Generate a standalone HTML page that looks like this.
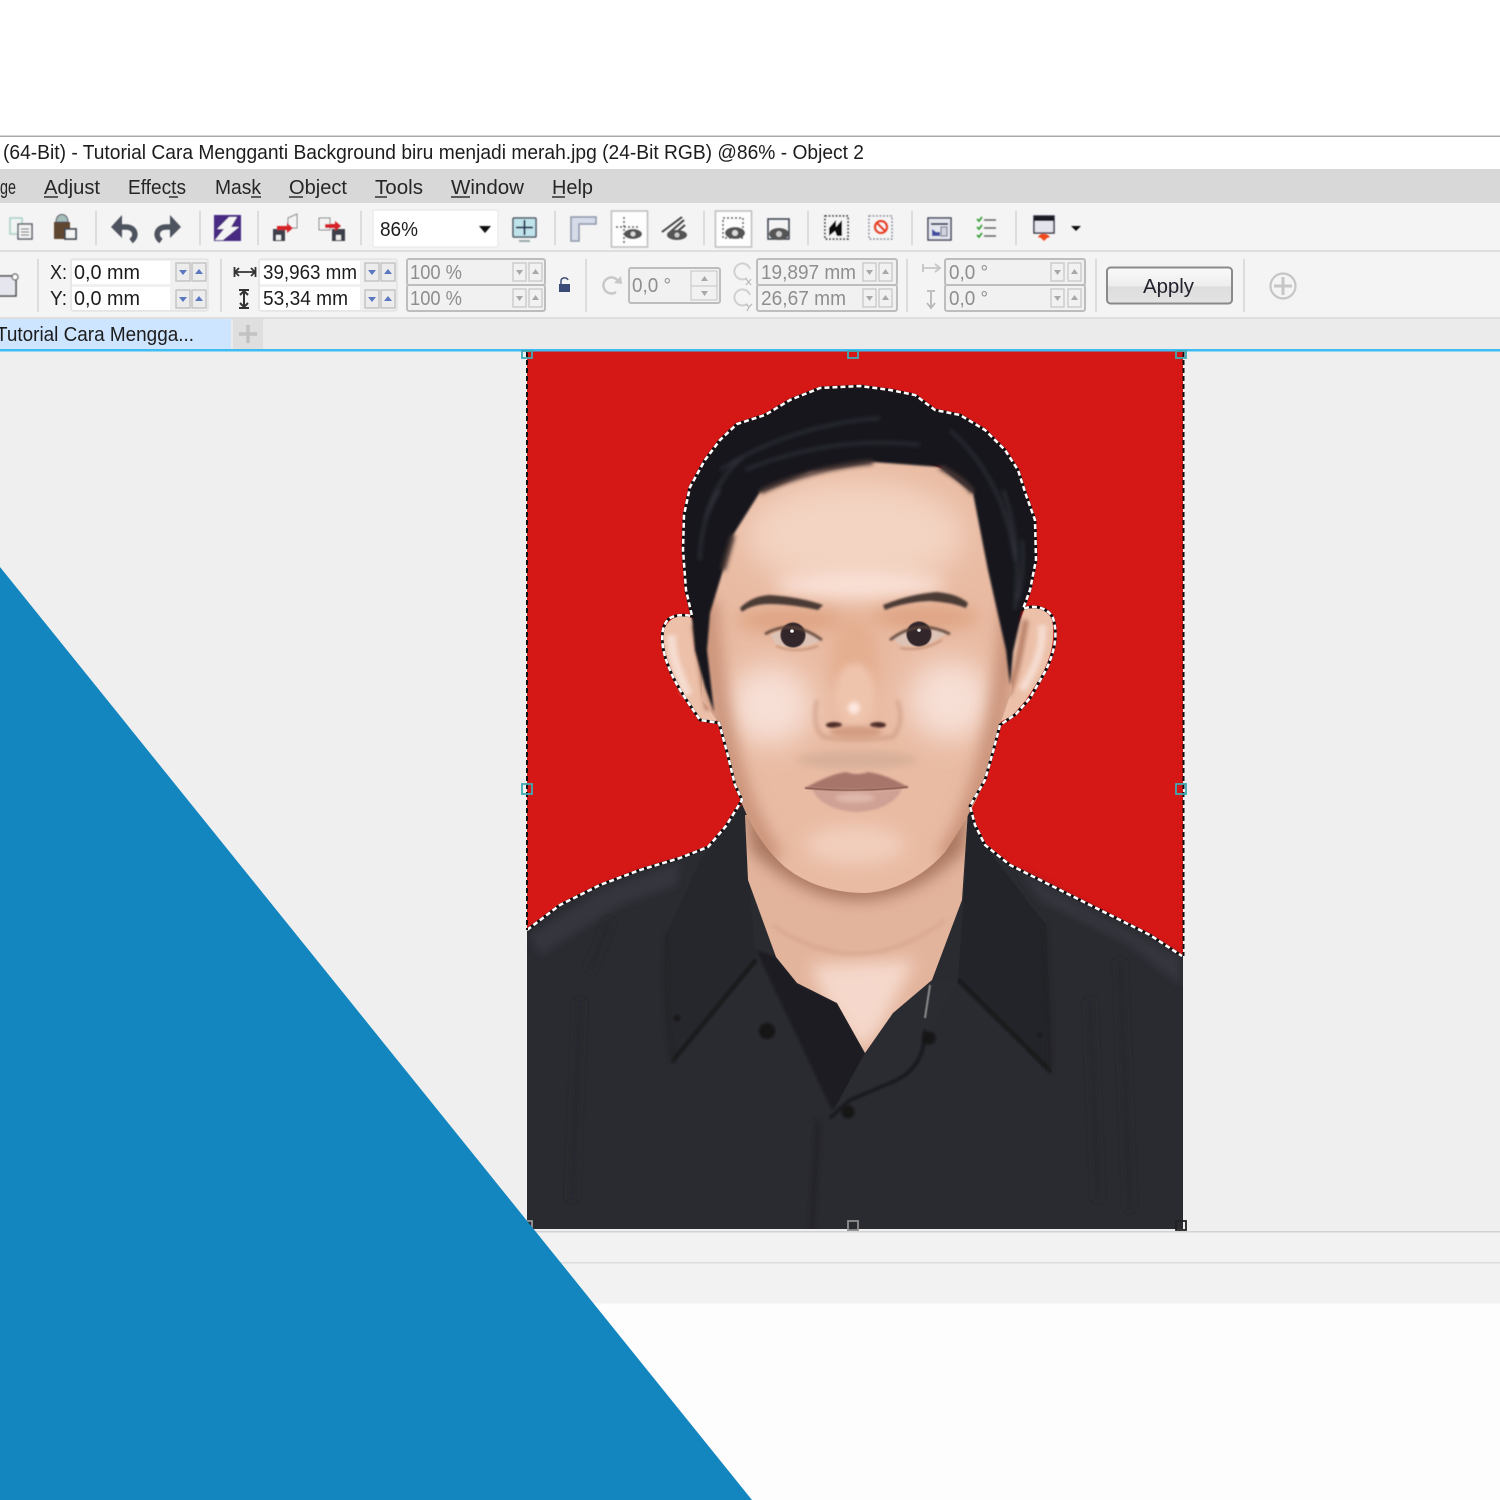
<!DOCTYPE html>
<html><head><meta charset="utf-8"><style>
html,body{margin:0;padding:0;background:#fff;width:1500px;height:1500px;overflow:hidden}
svg{display:block}
text{font-family:"Liberation Sans",sans-serif}
</style></head><body>
<svg width="1500" height="1500" viewBox="0 0 1500 1500" xmlns="http://www.w3.org/2000/svg">
<defs>
<filter id="b02" filterUnits="userSpaceOnUse" x="0" y="0" width="1500" height="1500"><feGaussianBlur stdDeviation="0.25"/></filter>
<filter id="b03" filterUnits="userSpaceOnUse" x="0" y="0" width="1500" height="1500"><feGaussianBlur stdDeviation="0.45"/></filter>
<filter id="b1" filterUnits="userSpaceOnUse" x="0" y="0" width="1500" height="1500"><feGaussianBlur stdDeviation="1.1"/></filter>
<filter id="b2" filterUnits="userSpaceOnUse" x="0" y="0" width="1500" height="1500"><feGaussianBlur stdDeviation="2"/></filter>
<filter id="b4" filterUnits="userSpaceOnUse" x="0" y="0" width="1500" height="1500"><feGaussianBlur stdDeviation="4"/></filter>
<filter id="b8" filterUnits="userSpaceOnUse" x="0" y="0" width="1500" height="1500"><feGaussianBlur stdDeviation="8"/></filter>
<filter id="b14" filterUnits="userSpaceOnUse" x="0" y="0" width="1500" height="1500"><feGaussianBlur stdDeviation="14"/></filter>
<linearGradient id="ap" x1="0" y1="0" x2="0" y2="1"><stop offset="0" stop-color="#fafafa"/><stop offset=".5" stop-color="#eee"/><stop offset=".55" stop-color="#ddd"/><stop offset="1" stop-color="#e4e4e4"/></linearGradient>
<g id="sd"><rect x="0" y="0" width="14" height="18" fill="#ececec" stroke="#bbb" stroke-width="1.2"/><path d="M3 7h8l-4 5z" fill="#5a78c0"/></g>
<g id="su"><rect x="0" y="0" width="14" height="18" fill="#ececec" stroke="#bbb" stroke-width="1.2"/><path d="M3 11h8L7 6z" fill="#5a78c0"/></g>
<g id="gd"><rect x="0" y="0" width="13" height="18" fill="#f1f1f1" stroke="#c4c4c4" stroke-width="1.2"/><path d="M3 7h7l-3.500 5z" fill="#a8a8a8"/></g>
<g id="gu"><rect x="0" y="0" width="13" height="18" fill="#f1f1f1" stroke="#c4c4c4" stroke-width="1.2"/><path d="M3 11h7l-3.500-5z" fill="#a8a8a8"/></g>
<path id="sil" d="M527 930 L560 905 600 885 640 870 680 858 708 847 726 826 742 800 L735 785 727 752 719 723 700 720 C690 705 675 685 668 665 C660 645 660 625 670 618 C678 614 686 615 692 616 L686 590 683 550 684 515 690 487 705 460 720 440 737 424 765 415 790 400 820 388 860 386 890 390 915 395 935 410 960 415 985 430 1005 450 1018 470 1026 495 1035 520 1036 560 1030 590 1023 609 C1035 604 1048 608 1053 618 C1058 635 1055 650 1046 670 L1030 698 1016 714 1000 725 994 748 985 780 970 806 975 825 985 845 1010 865 1060 890 1110 915 1150 935 1182 956"/>
<clipPath id="face"><path d="M702 600 L735 500 L860 440 L975 480 L1006 600 L1012 690 1000 725 994 748 985 780 C975 805 960 830 945 852 C925 875 895 892 865 893 C840 893 810 887 785 867 C760 845 745 815 735 785 L727 752 719 723 702 700Z"/></clipPath>
<clipPath id="neck"><path d="M745 815 L748 880 776 957 797 983 837 1003 865 1053 893 1013 932 980 962 900 968 810Z"/></clipPath>
<clipPath id="photo"><rect x="527" y="352" width="656" height="877"/></clipPath>
</defs>

<!-- page -->
<rect width="1500" height="1500" fill="#fff"/>
<rect y="135.500" width="1500" height="1.500" fill="#a9a9a9"/>
<rect y="169" width="1500" height="34" fill="#d8d8d8"/>
<rect y="203" width="1500" height="47" fill="#f4f4f4"/>
<rect y="250" width="1500" height="2" fill="#dedede"/>
<rect y="252" width="1500" height="65" fill="#f4f4f4"/>
<rect y="317" width="1500" height="2" fill="#dedede"/>
<rect y="319" width="1500" height="30" fill="#ebebeb"/>
<rect x="0" y="319" width="231" height="30" fill="#cde5ff"/>
<rect x="233" y="319" width="30" height="30" fill="#dfdfdf"/>
<path d="M248 325v18M239 334h18" stroke="#c2c2c2" stroke-width="3.500"/>
<rect y="349" width="1500" height="2.500" fill="#3dbdf2"/>
<rect y="351.500" width="1500" height="879.500" fill="#efefef"/>
<rect y="1231" width="1500" height="1.500" fill="#d2d2d2"/>
<rect y="1232.500" width="1500" height="29.500" fill="#f2f2f2"/>
<rect y="1262" width="1500" height="1.500" fill="#dcdcdc"/>
<rect y="1263.500" width="1500" height="40" fill="#f2f2f2"/>
<rect y="1303.500" width="1500" height="196.500" fill="#fdfdfd"/>

<!-- text -->
<g filter="url(#b02)" fill="#1f1f1f">
<text x="3" y="159" font-size="20" textLength="861" lengthAdjust="spacingAndGlyphs">(64-Bit) - Tutorial Cara Mengganti Background biru menjadi merah.jpg (24-Bit RGB) @86% - Object 2</text>
<g font-size="20" fill="#262626">
<text x="0" y="194" textLength="16" lengthAdjust="spacingAndGlyphs">ge</text>
<text x="44" y="194" textLength="56" lengthAdjust="spacingAndGlyphs">Adjust</text>
<text x="128" y="194" textLength="58" lengthAdjust="spacingAndGlyphs">Effects</text>
<text x="215" y="194" textLength="46" lengthAdjust="spacingAndGlyphs">Mask</text>
<text x="289" y="194" textLength="58" lengthAdjust="spacingAndGlyphs">Object</text>
<text x="375" y="194" textLength="48" lengthAdjust="spacingAndGlyphs">Tools</text>
<text x="451" y="194" textLength="73" lengthAdjust="spacingAndGlyphs">Window</text>
<text x="552" y="194" textLength="41" lengthAdjust="spacingAndGlyphs">Help</text>
</g>
<path d="M44 197h14M169 197h9M251 197h10M289 197h14M375 197h12M451 197h19M552 197h13" stroke="#333" stroke-width="1.500"/>
</g>

<!-- toolbar separators -->
<g fill="#dcdcdc">
<rect x="95" y="211" width="2" height="34"/><rect x="199" y="211" width="2" height="34"/><rect x="257" y="211" width="2" height="34"/><rect x="360" y="211" width="2" height="34"/><rect x="554" y="211" width="2" height="34"/><rect x="703" y="211" width="2" height="34"/><rect x="807" y="211" width="2" height="34"/><rect x="911" y="211" width="2" height="34"/><rect x="1015" y="211" width="2" height="34"/>
<rect x="37" y="259" width="2" height="53"/><rect x="220" y="259" width="2" height="53"/><rect x="585" y="259" width="2" height="53"/><rect x="906" y="259" width="2" height="53"/><rect x="1095" y="259" width="2" height="53"/><rect x="1243" y="259" width="2" height="53"/>
</g>

<!-- toolbar icons -->
<rect x="373" y="210" width="125" height="37" rx="2" fill="#fff" stroke="#e6e6e6"/>
<text x="380" y="236" font-size="20" fill="#1f1f1f" textLength="38" lengthAdjust="spacingAndGlyphs" filter="url(#b02)">86%</text>
<g filter="url(#b03)">
<rect x="10" y="218" width="12" height="16" fill="#eef5f3" stroke="#a9cfc7" stroke-width="1.500"/>
<rect x="18" y="224" width="14" height="15" fill="#f2f2f2" stroke="#5b5f6a" stroke-width="1.500"/>
<path d="M21 229h8M21 232h8M21 235h8" stroke="#5b5f6a"/>
<rect x="54" y="222" width="16" height="17" fill="#5e4630"/>
<path d="M56 222c0-10 12-10 12 0z" fill="#a5bdb8" stroke="#556"/>
<rect x="65" y="229" width="11" height="10" fill="#f4f4f4" stroke="#444b55" stroke-width="1.800"/>
<path d="M122 215 L111 227 L122 238Z" fill="#4e535f"/>
<path d="M119 227H126C135 227 138 236 131 241" fill="none" stroke="#4e535f" stroke-width="5.500"/>
<path d="M170 215 L181 227 L170 238Z" fill="#4e535f"/>
<path d="M173 227H166C157 227 154 236 161 241" fill="none" stroke="#4e535f" stroke-width="5.500"/>
<rect x="214" y="215" width="27" height="26" fill="#4a2a82"/>
<path d="M229 217h8l-6 10h8l-16 13h-8l9-11h-7z" fill="#f4f4f4"/>
<rect x="273" y="229" width="12" height="12" fill="#3c3f4c"/><rect x="276" y="235" width="5" height="5" fill="#eee"/>
<path d="M288 218l9-4v14h-9z" fill="#f3f3f3" stroke="#888"/>
<path d="M277 226h10v-3l6 5-6 5v-3h-10z" fill="#d52027"/>
<path d="M319 218h11v12h-11z" fill="#f3f3f3" stroke="#888"/>
<rect x="332" y="229" width="13" height="12" fill="#3c3f4c"/><rect x="336" y="235" width="5" height="5" fill="#eee"/>
<path d="M325 224h10v-3l6 5-6 5v-3h-10z" fill="#d52027"/>
<path d="M479 226h12l-6 7z" fill="#111"/>
<rect x="513" y="218" width="23" height="19" rx="1" fill="#bfe3ea" stroke="#4f5663" stroke-width="1.500"/>
<path d="M524.500 220v15M516 227.500h17" stroke="#2a3a58" stroke-width="2"/>
<path d="M519 241h11" stroke="#9aa" stroke-width="2"/>
<path d="M571 217h25v7h-17v17h-8z" fill="#d5dbe8" stroke="#8e96aa" stroke-width="1.500"/>
<rect x="611.500" y="211" width="36" height="36" fill="#fdfdfd" stroke="#bdbdbd" stroke-width="1.500"/>
<path d="M616 227h22M624 217v26" stroke="#333" stroke-width="1.500" stroke-dasharray="2 2"/>
<ellipse cx="633" cy="234" rx="9" ry="5" fill="#555"/><circle cx="633" cy="234" r="2.500" fill="#ddd"/>
<path d="M662 232l20-15M668 234l16-14M672 236l13-11" stroke="#444" stroke-width="2"/>
<ellipse cx="677" cy="235" rx="10" ry="5" fill="#555"/><circle cx="677" cy="235" r="2.500" fill="#ccc"/>
<rect x="715.500" y="211" width="36" height="36" fill="#fdfdfd" stroke="#bdbdbd" stroke-width="1.500"/>
<rect x="723" y="218" width="20" height="20" fill="none" stroke="#333" stroke-dasharray="2 2" stroke-width="1.500"/>
<ellipse cx="735" cy="233" rx="10" ry="6" fill="#555"/><circle cx="735" cy="233" r="3" fill="#ddd"/>
<rect x="768" y="219" width="21" height="20" fill="none" stroke="#3a3f4c" stroke-width="1.500"/>
<ellipse cx="779" cy="234" rx="10" ry="6" fill="#555"/><circle cx="779" cy="234" r="3" fill="#ccc"/>
<rect x="825" y="216" width="23" height="23" fill="#f5f5f5" stroke="#222" stroke-width="1.500" stroke-dasharray="2 1.500"/>
<path d="M829 228l7-8v7l6-7v16h-5l-2-5-6 5z" fill="#111"/>
<rect x="869" y="216" width="23" height="23" fill="#f5f5f5" stroke="#8c90a0" stroke-width="1.500" stroke-dasharray="2 1.500"/>
<circle cx="881" cy="227" r="6" fill="none" stroke="#e8401c" stroke-width="2.500"/><path d="M877 223l8 8" stroke="#e8401c" stroke-width="2.500"/>
<rect x="928" y="218" width="23" height="22" fill="#e4e6ee" stroke="#40455a" stroke-width="1.500"/>
<path d="M931 224h17" stroke="#40455a" stroke-width="2"/>
<path d="M932 236v-7l4 3h4v4z" fill="#3f4fa0"/><rect x="941" y="227" width="6" height="9" fill="#cfd3e0" stroke="#667"/>
<path d="M977 219l2 2 3-4M977 227l2 2 3-4M977 235l2 2 3-4" stroke="#3ea03a" stroke-width="1.800" fill="none"/>
<path d="M984 220h12M984 228h12M984 236h12" stroke="#666" stroke-width="1.500"/>
<rect x="1034" y="216" width="20" height="17" fill="#e4e4ec" stroke="#3a3a4a" stroke-width="1.500"/>
<rect x="1034" y="216" width="20" height="5" fill="#1a1a28"/>
<path d="M1038 237c2-3 3-3 6-3 3 0 4 1 6 3l-3 1-3 3-3-3z" fill="#f0481a"/>
<path d="M1071 226h10l-5 5z" fill="#111"/>
<rect x="-2" y="276" width="18" height="20" fill="#e6e6ee" stroke="#444" stroke-width="1.500"/>
<circle cx="15" cy="277" r="3" fill="#fff" stroke="#555" stroke-width="1.200"/>
</g>

<!-- property bar -->
<g>
<rect x="71" y="259" width="137" height="52" rx="2" fill="#f0f0f0" stroke="#ddd" stroke-width="1"/>
<rect x="72" y="261" width="98" height="23" fill="#fff"/><rect x="72" y="287" width="98" height="23" fill="#fff"/>
<rect x="259" y="259" width="138" height="52" rx="2" fill="#f0f0f0" stroke="#ddd" stroke-width="1"/>
<rect x="260" y="261" width="100" height="23" fill="#fff"/><rect x="260" y="287" width="100" height="23" fill="#fff"/>
<use href="#sd" x="176" y="263"/><use href="#su" x="192" y="263"/><use href="#sd" x="176" y="290"/><use href="#su" x="192" y="290"/>
<use href="#sd" x="365" y="263"/><use href="#su" x="381" y="263"/><use href="#sd" x="365" y="290"/><use href="#su" x="381" y="290"/>

<rect x="407" y="259" width="138" height="26" rx="2" fill="#f1f1f1" stroke="#bdbdbd" stroke-width="2"/>
<rect x="407" y="285" width="138" height="26" rx="2" fill="#f1f1f1" stroke="#bdbdbd" stroke-width="2"/>
<use href="#gd" x="513" y="263"/><use href="#gu" x="529" y="263"/><use href="#gd" x="513" y="289"/><use href="#gu" x="529" y="289"/>

<rect x="629" y="268" width="91" height="35" rx="2" fill="#f1f1f1" stroke="#bdbdbd" stroke-width="2"/>
<rect x="691" y="271" width="26" height="15" fill="#f1f1f1" stroke="#c4c4c4"/><rect x="691" y="286" width="26" height="14" fill="#f1f1f1" stroke="#c4c4c4"/>
<path d="M701 281h7l-3.500-5zM701 291h7l-3.500 5z" fill="#a8a8a8"/>

<rect x="757" y="259" width="140" height="26" rx="2" fill="#f1f1f1" stroke="#bdbdbd" stroke-width="2"/>
<rect x="757" y="285" width="140" height="26" rx="2" fill="#f1f1f1" stroke="#bdbdbd" stroke-width="2"/>
<use href="#gd" x="863" y="263"/><use href="#gu" x="879" y="263"/><use href="#gd" x="863" y="289"/><use href="#gu" x="879" y="289"/>

<rect x="945" y="259" width="140" height="26" rx="2" fill="#f1f1f1" stroke="#bdbdbd" stroke-width="2"/>
<rect x="945" y="285" width="140" height="26" rx="2" fill="#f1f1f1" stroke="#bdbdbd" stroke-width="2"/>
<use href="#gd" x="1051" y="263"/><use href="#gu" x="1068" y="263"/><use href="#gd" x="1051" y="289"/><use href="#gu" x="1068" y="289"/>

<g font-size="20" fill="#1f1f1f" filter="url(#b02)">
<text x="50" y="279" textLength="17" lengthAdjust="spacingAndGlyphs">X:</text>
<text x="50" y="305" textLength="17" lengthAdjust="spacingAndGlyphs">Y:</text>
<text x="74" y="279" textLength="66" lengthAdjust="spacingAndGlyphs">0,0 mm</text>
<text x="74" y="305" textLength="66" lengthAdjust="spacingAndGlyphs">0,0 mm</text>
<text x="263" y="279" textLength="94" lengthAdjust="spacingAndGlyphs">39,963 mm</text>
<text x="263" y="305" textLength="85" lengthAdjust="spacingAndGlyphs">53,34 mm</text>
</g>
<g font-size="20" fill="#8e8e8e" filter="url(#b02)">
<text x="410" y="279" textLength="52" lengthAdjust="spacingAndGlyphs">100 %</text>
<text x="410" y="305" textLength="52" lengthAdjust="spacingAndGlyphs">100 %</text>
<text x="632" y="292" textLength="39" lengthAdjust="spacingAndGlyphs">0,0 °</text>
<text x="761" y="279" textLength="95" lengthAdjust="spacingAndGlyphs">19,897 mm</text>
<text x="761" y="305" textLength="85" lengthAdjust="spacingAndGlyphs">26,67 mm</text>
<text x="949" y="279" textLength="39" lengthAdjust="spacingAndGlyphs">0,0 °</text>
<text x="949" y="305" textLength="39" lengthAdjust="spacingAndGlyphs">0,0 °</text>
</g>
<path d="M235 272h20M239 268l-4 4 4 4M251 268l4 4-4 4M234.500 267v10M255.500 267v10" stroke="#333" stroke-width="1.800" fill="none"/>
<path d="M244 291v16M240 295l4-4 4 4M240 303l4 4 4-4M239 290h10M239 308h10" stroke="#333" stroke-width="2" fill="none"/>
<rect x="559" y="284" width="11" height="8" fill="#3c4a78"/><path d="M561 284v-3c0-4 6-4 7-1" fill="none" stroke="#3c4a78" stroke-width="1.500"/>
<path d="M619 283a8 8 0 1 0 -3 9" fill="none" stroke="#c8c8c8" stroke-width="2.500"/><path d="M614 283l8 1 -1-8z" fill="#c8c8c8"/>
<path d="M750 269a8 8 0 1 0 -3 9" fill="none" stroke="#d0d0d0" stroke-width="2"/><path d="M746 279l5 6M751 279l-5 6" stroke="#bbb" stroke-width="1.300"/>
<path d="M750 295a8 8 0 1 0 -3 9" fill="none" stroke="#d0d0d0" stroke-width="2"/><path d="M746 304l3 3 3-3M749 307l-2 4" stroke="#bbb" stroke-width="1.300" fill="none"/>
<path d="M922 268h17M935 264l5 4-5 4M923 264v8" fill="none" stroke="#c6c6c6" stroke-width="1.800"/>
<path d="M931 292v15M927 303l4 5 4-5M927 291h8" fill="none" stroke="#b8b8b8" stroke-width="1.800"/>
<rect x="1107" y="267.500" width="125" height="36" rx="3.500" fill="url(#ap)" stroke="#8a8a8a" stroke-width="2"/>
<text x="1143" y="293" font-size="20" fill="#22222e" textLength="51" lengthAdjust="spacingAndGlyphs" filter="url(#b02)">Apply</text>
<circle cx="1283" cy="286" r="12.500" fill="none" stroke="#c6c6c6" stroke-width="2.200"/>
<path d="M1283 277v18M1274 286h18" stroke="#c6c6c6" stroke-width="3"/>
<text x="-4" y="341" font-size="20" fill="#1f1f1f" textLength="198" lengthAdjust="spacingAndGlyphs" filter="url(#b02)">Tutorial Cara Mengga...</text>
</g>

<!-- PHOTO -->
<g clip-path="url(#photo)">
<rect x="527" y="352" width="656" height="877" fill="#d51716"/>
<!-- shirt -->
<path d="M527 930 L560 905 600 885 640 870 680 858 708 847 726 826 745 800 L970 806 975 825 985 845 1010 865 1060 890 1110 915 1150 935 1183 956 V1229 H527 Z" fill="#2a2b31"/>
<path d="M530 935 L600 890 680 862 L676 885 620 905 L540 955Z" fill="#35363c" filter="url(#b4)"/>
<path d="M1020 872 L1180 958 V985 L1130 945 1040 900Z" fill="#35363c" filter="url(#b4)"/>
<path d="M580 1000l-8 200M1120 960l10 250M1090 1000l8 200M610 920l-20 50" stroke="#26272c" stroke-width="5" fill="none" filter="url(#b4)"/>
<path d="M818 1120 L812 1229" stroke="#212227" stroke-width="5" filter="url(#b2)"/>
<!-- left collar -->
<path d="M745 800 L748 870 756 960 L672 1062 C667 1030 663 990 666 935 L700 860 730 825Z" fill="#26272c"/>
<path d="M672 1062 L756 960" stroke="#131316" stroke-width="3" filter="url(#b1)"/>
<path d="M672 1062C666 1030 663 990 666 935" stroke="#222328" stroke-width="3" fill="none" filter="url(#b2)"/>
<!-- right collar -->
<path d="M968 806 L965 880 958 980 L1051 1072 C1052 1030 1048 980 1046 925 L1000 865 985 845Z" fill="#232429"/>
<path d="M958 980 L1051 1072" stroke="#131316" stroke-width="3" filter="url(#b1)"/>
<path d="M1051 1072C1052 1030 1048 980 1046 925" stroke="#222328" stroke-width="3" fill="none" filter="url(#b2)"/>
<!-- placket -->
<path d="M756 950 L776 957 797 983 837 1003 865 1053 L862 1085 832 1110 Z" fill="#1b1b20" filter="url(#b1)"/>
<path d="M865 1053 L893 1013 932 980 958 980 L925 1040 905 1078 835 1108 850 1080Z" fill="#2b2c32"/>
<path d="M925 1030C925 1055 915 1075 885 1085 L850 1100 830 1118" fill="none" stroke="#17171b" stroke-width="3" filter="url(#b1)"/>
<path d="M930 985 L925 1018" stroke="#8a8c8c" stroke-width="2" filter="url(#b03)"/>
<g fill="#141418" filter="url(#b1)"><circle cx="767" cy="1031" r="8"/><circle cx="929" cy="1038" r="6.500"/><circle cx="848" cy="1112" r="6.500"/><circle cx="677" cy="1018" r="3"/><circle cx="1040" cy="1035" r="2"/></g>
<!-- neck -->
<g clip-path="url(#neck)">
<rect x="740" y="800" width="240" height="260" fill="#e3b49c"/>
<path d="M810 965 L915 960 880 1030 860 1050 825 1000Z" fill="#f5d8cb" filter="url(#b8)"/>
<path d="M750 850 Q860 950 965 850 L968 800 745 800Z" fill="#a9765f" filter="url(#b8)"/>
<path d="M772 925 Q860 985 945 920" stroke="#cf9d85" stroke-width="2" fill="none" filter="url(#b2)"/>
</g>
<!-- ears -->
<path d="M692 618 C680 613 668 618 664 630 C660 650 668 668 680 692 L698 718 716 722 722 700 708 650Z" fill="#ecc0a9"/>
<path d="M672 635c-2 20 8 40 16 60" stroke="#f6dcd0" stroke-width="9" fill="none" filter="url(#b2)"/>
<path d="M694 625c6 25 8 50 14 85" stroke="#b98169" stroke-width="6" fill="none" filter="url(#b2)"/>
<path d="M1024 610 C1036 605 1048 610 1052 620 C1056 640 1050 660 1040 678 L1026 700 1012 716 1000 722 1000 690 1012 640Z" fill="#ecc0a9"/>
<path d="M1042 625c2 25-8 45-20 65" stroke="#f6dcd0" stroke-width="8" fill="none" filter="url(#b2)"/>
<path d="M1026 620c-5 25-8 50-18 75" stroke="#b98169" stroke-width="6" fill="none" filter="url(#b2)"/>
<!-- face -->
<g clip-path="url(#face)">
<rect x="680" y="430" width="350" height="480" fill="#e9bba3"/>
<ellipse cx="855" cy="535" rx="110" ry="55" fill="#f3d3c1" filter="url(#b14)"/>
<ellipse cx="860" cy="585" rx="85" ry="13" fill="#f9e0d6" filter="url(#b8)"/>
<ellipse cx="770" cy="705" rx="42" ry="40" fill="#f7dfd5" filter="url(#b14)"/>
<ellipse cx="950" cy="700" rx="42" ry="40" fill="#f7dfd5" filter="url(#b14)"/>
<ellipse cx="855" cy="660" rx="24" ry="45" fill="#e4ae90" filter="url(#b8)"/>
<ellipse cx="790" cy="620" rx="55" ry="13" fill="#dfa484" filter="url(#b8)"/>
<ellipse cx="925" cy="617" rx="55" ry="13" fill="#dfa484" filter="url(#b8)"/>
<path d="M708 600 Q718 780 775 860" stroke="#c68d73" stroke-width="18" fill="none" filter="url(#b8)"/>
<path d="M1012 600 Q998 780 945 860" stroke="#c68d73" stroke-width="18" fill="none" filter="url(#b8)"/>
<ellipse cx="855" cy="845" rx="50" ry="20" fill="#f1cdbb" filter="url(#b8)"/>
<ellipse cx="857" cy="760" rx="60" ry="9" fill="#d8b09a" filter="url(#b4)"/>
</g>
<!-- hair -->
<path d="M692 618 L686 590 683 550 684 515 690 487 705 460 720 440 737 424 765 415 790 400 820 388 860 386 890 390 915 395 935 410 960 415 985 430 1005 450 1018 470 1026 495 1035 520 1036 560 1030 590 1022 612 1013 652 1010 685 1006 650 997 610 988 570 973 493 940 467 873 462 810 472 760 492 733 535 723 570 710 613 707 650 714 712 705 687 695 650Z" fill="#16161b" filter="url(#b1)"/>
<path d="M720 470 Q790 425 880 418M745 470 Q830 435 920 445M950 430 Q1005 480 1015 560M705 520 Q715 480 745 455M1003 490 Q1022 540 1015 610M700 560 Q700 520 720 490M1022 540 Q1025 570 1018 600" fill="none" stroke="#33343d" stroke-width="2.500" filter="url(#b2)"/>
<path d="M760 492 Q810 468 873 462 M940 467 Q965 480 973 493 M733 535 L723 570" fill="none" stroke="#4a3835" stroke-width="5" filter="url(#b2)"/>
<!-- brows -->
<path d="M740 608 Q752 596 770 595 Q800 597 823 605 L818 610 Q790 604 770 604 Q752 604 742 612Z" fill="#4b3a36" filter="url(#b1)"/>
<path d="M883 605 Q910 594 937 592 Q958 594 968 603 L966 608 Q950 602 930 601 Q905 602 885 610Z" fill="#4b3a36" filter="url(#b1)"/>
<!-- eyes -->
<path d="M770 635 Q792 622 822 640 Q798 652 776 644Z" fill="#dcc3b5" filter="url(#b03)"/>
<path d="M893 638 Q918 622 947 633 Q925 650 900 645Z" fill="#dcc3b5" filter="url(#b03)"/>
<circle cx="793" cy="635" r="12.500" fill="#32262a" filter="url(#b03)"/><circle cx="919" cy="634" r="12.500" fill="#32262a" filter="url(#b03)"/>
<circle cx="792" cy="631" r="1.800" fill="#fff"/><circle cx="919" cy="630" r="1.800" fill="#fff"/>
<path d="M765 634 Q792 618 822 640" fill="none" stroke="#5a4238" stroke-width="2.500" filter="url(#b1)"/>
<path d="M890 640 Q918 618 950 634" fill="none" stroke="#5a4238" stroke-width="2.500" filter="url(#b1)"/>
<path d="M776 646 Q795 654 818 646M900 648 Q922 652 942 640" fill="none" stroke="#c8957c" stroke-width="2" filter="url(#b1)"/>
<!-- nose -->
<ellipse cx="855" cy="695" rx="20" ry="32" fill="#efc4ad" filter="url(#b4)"/>
<circle cx="854" cy="708" r="6" fill="#fde8df" filter="url(#b2)"/>
<path d="M817 700 Q811 728 824 737 Q855 742 893 737 Q905 722 897 700" fill="none" stroke="#bd8a70" stroke-width="2.500" opacity=".75" filter="url(#b2)"/>
<ellipse cx="834" cy="725" rx="8" ry="3" fill="#4b2c26" filter="url(#b1)"/>
<ellipse cx="878" cy="725" rx="8" ry="3" fill="#4b2c26" filter="url(#b1)"/>
<ellipse cx="856" cy="732" rx="26" ry="6" fill="#d39d82" filter="url(#b2)"/>
<!-- lips -->
<path d="M805 788 Q830 774 846 772 Q857 776 868 772 Q885 774 908 787 Q857 792 805 788Z" fill="#a8746b" filter="url(#b1)"/>
<path d="M812 789 Q857 794 902 789 Q892 810 857 812 Q822 810 812 789Z" fill="#cfa094" filter="url(#b1)"/>
<path d="M805 788 Q857 793 908 787" fill="none" stroke="#7b4d45" stroke-width="1.500" filter="url(#b03)"/>
<ellipse cx="855" cy="798" rx="20" ry="5" fill="#dfb7ab" filter="url(#b2)"/>
<!-- selection dashes -->
<use href="#sil" fill="none" stroke="#111" stroke-width="2.800"/>
<use href="#sil" fill="none" stroke="#fff" stroke-width="2.500" stroke-dasharray="5 3"/>
</g>

<!-- border dashes -->
<path d="M527 352V930" stroke="#111" stroke-width="2" stroke-dasharray="5 3"/>
<path d="M1183.500 352V956" stroke="#111" stroke-width="2" stroke-dasharray="5 3"/>
<path d="M527 352H1183" stroke="#d51716" stroke-width="1"/>

<!-- handles -->
<g fill="none" stroke="#3eaab4" stroke-width="1.800">
<rect x="522" y="351" width="10" height="7"/><rect x="848" y="351" width="10" height="7"/><rect x="1176" y="351" width="10" height="7"/>
<rect x="522" y="784" width="10" height="10"/><rect x="1176" y="784" width="10" height="10"/>
</g>
<rect x="848" y="1221" width="10" height="9" fill="#2a2b31" stroke="#8f8f8f" stroke-width="1.800"/>
<rect x="1176" y="1221" width="10" height="9" fill="none" stroke="#222" stroke-width="1.800"/>
<rect x="522" y="1221" width="10" height="9" fill="none" stroke="#999" stroke-width="1.800"/>

<!-- blue triangle -->
<path d="M0 567 L752 1500 H0 Z" fill="#1386c0"/>
</svg>
</body></html>
